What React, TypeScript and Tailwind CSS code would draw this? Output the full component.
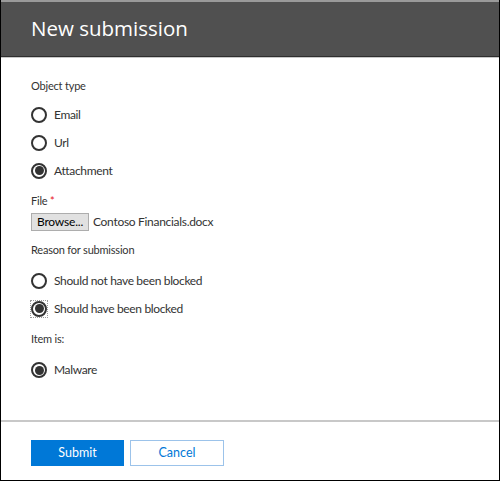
import React from "react";

function Radio({ checked, label, focus }: { checked?: boolean; label: string; focus?: boolean }) {
  return (
    <div className="flex items-center h-[20px]">
      <div className={"flex items-center justify-center " + (focus ? "outline outline-1 outline-dotted outline-[#9a9a9a]" : "")}>
        <div className="w-[16px] h-[16px] rounded-full border-2 border-[#333333] flex items-center justify-center bg-white">
          {checked && <div className="w-[9px] h-[9px] rounded-full bg-[#333333]" />}
        </div>
      </div>
      <span className="ml-[7px] text-[12px] tracking-[-0.35px] text-[#333333]">{label}</span>
    </div>
  );
}

export default function App() {
  return (
    <div
      className="w-[500px] h-[481px] bg-white flex flex-col border-l border-r border-b border-black"
      style={{ fontFamily: 'Lato, "Open Sans", sans-serif' }}
    >
      <div className="h-[57px] bg-[#505050] border-t-2 border-t-[#9a9a9a] border-b border-b-[#2e2e2e] flex items-center pl-[30px] shadow-[0_1px_0_#c8c8c8]">
        <h1
          className="text-[20.5px] text-white font-normal -mt-[1px]"
          style={{ fontFamily: '"Open Sans", sans-serif' }}
        >
          New submission
        </h1>
      </div>
      <div className="flex-1 flex flex-col pl-[30px] pt-[21px]">
        <div className="text-[11px] tracking-[-0.2px] text-[#333333]">Object type</div>
        <div className="flex flex-col gap-[8px] mt-[10px]">
          <Radio label="Email" />
          <Radio label="Url" />
          <Radio label="Attachment" checked />
        </div>
        <div className="text-[11px] tracking-[-0.2px] text-[#333333] mt-[12px]">
          File <span className="text-[#e81123]">*</span>
        </div>
        <div className="flex items-center mt-[4px]">
          <div className="h-[18px] w-[58px] justify-center bg-[#e1e1e1] border border-[#adadad] text-[12px] tracking-[-0.2px] text-black flex items-center leading-none">
            Browse...
          </div>
          <span className="ml-[4px] text-[12px] tracking-[-0.3px] text-[#333333]">Contoso Financials.docx</span>
        </div>
        <div className="text-[11px] tracking-[-0.2px] text-[#333333] mt-[11px]">Reason for submission</div>
        <div className="flex flex-col gap-[8px] mt-[12px]">
          <Radio label="Should not have been blocked" />
          <Radio label="Should have been blocked" checked focus />
        </div>
        <div className="text-[11px] tracking-[-0.2px] text-[#333333] mt-[12px]">Item is:</div>
        <div className="mt-[13px]">
          <Radio label="Malware" checked />
        </div>
      </div>
      <div className="h-[2px] bg-[#c8c8c8]" />
      <div className="h-[58px] flex items-start pl-[30px] pt-[18px] gap-[6px]">
        <button className="w-[93px] h-[26px] bg-[#0078d7] text-white text-[12.5px]">Submit</button>
        <button className="w-[94px] h-[26px] border border-[#9cc3ea] bg-white text-[#0078d7] text-[12.5px]">Cancel</button>
      </div>
    </div>
  );
}
